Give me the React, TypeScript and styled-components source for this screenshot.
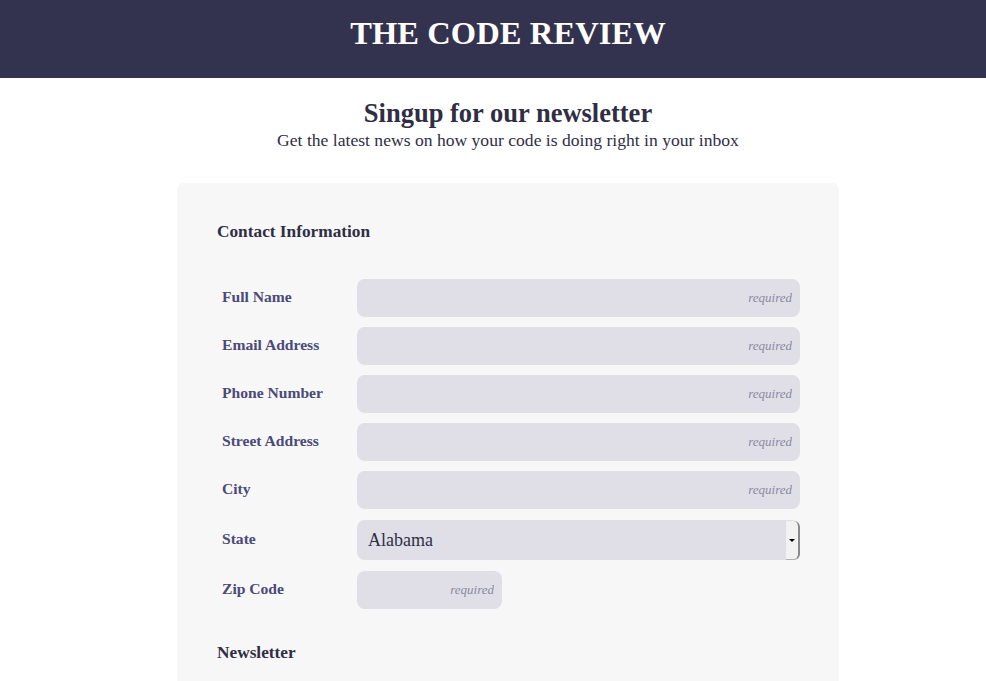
import React from "react";
import styled, { createGlobalStyle } from "styled-components";

const Global = createGlobalStyle`
  html, body { margin: 0; padding: 0; background: #ffffff; }
  body { font-family: "Liberation Serif", "Times New Roman", serif; color: #2f2e45; }
  * { box-sizing: border-box; }
`;

const Header = styled.header`
  height: 78px;
  background: #34334f;
  display: flex;
  align-items: center;
  justify-content: center;
  padding-left: 30px;
`;

const Brand = styled.h1`
  margin: 0 0 12px 0;
  color: #ffffff;
  font-size: 32.5px;
  font-weight: 700;
  letter-spacing: 0.1px;
`;

const Main = styled.main`
  padding-left: 30px;
`;

const Intro = styled.section`
  display: flex;
  flex-direction: column;
  align-items: center;
  padding-top: 19px;
`;

const Title = styled.h2`
  margin: 0;
  font-size: 26.5px;
  line-height: 32px;
  font-weight: 700;
  color: #2f2e45;
`;

const Sub = styled.p`
  margin: 0;
  font-size: 17.6px;
  line-height: 22px;
  color: #2f2e45;
`;

const Card = styled.form`
  margin: 32px auto 0;
  width: 662px;
  background: #f7f7f7;
  border-radius: 7px;
  padding: 38px 39px 40px 40px;
`;

const Section = styled.h3`
  margin: 0 0 36px 0;
  font-size: 17.3px;
  line-height: 22px;
  font-weight: 700;
  color: #2f2e45;
`;

const Rows = styled.div`
  display: flex;
  flex-direction: column;
  gap: 10px;
  margin-bottom: 33px;
`;

const Row = styled.label`
  display: flex;
  align-items: center;
`;

const Label = styled.span`
  width: 140px;
  padding-left: 5px;
  font-size: 15.6px;
  font-weight: 700;
  color: #4b4a78;
  margin-top: -2px;
`;

const Input = styled.input<{ $w?: number }>`
  width: ${(p) => (p.$w ? `${p.$w}px` : "443px")};
  height: 38px;
  border: none;
  outline: none;
  border-radius: 8px;
  background: #e0dfe8;
  padding: 0 8px;
  text-align: right;
  font-family: "Liberation Serif", "Times New Roman", serif;
  font-size: 13px;
  &::placeholder {
    font-style: italic;
    color: #8b8aa0;
  }
`;

const SelectWrap = styled.div`
  position: relative;
  width: 443px;
  height: 40px;
  margin: 1px 0;
`;

const Select = styled.select`
  appearance: none;
  -webkit-appearance: none;
  width: 100%;
  height: 100%;
  border: none;
  outline: none;
  border-radius: 8px;
  background: #e0dfe8;
  padding: 0 11px;
  font-family: "Liberation Serif", "Times New Roman", serif;
  font-size: 18px;
  color: #2f2e45;
`;

const Arrow = styled.span`
  position: absolute;
  right: 0;
  top: 1px;
  bottom: 0;
  width: 14px;
  background: #f2f2f2;
  border-right: 2px solid #8a8a8a;
  border-bottom: 1px solid #b0b0b0;
  border-radius: 0 6px 6px 0;
  display: flex;
  align-items: center;
  justify-content: center;
  pointer-events: none;
  &::after {
    content: "";
    border-left: 3px solid transparent;
    border-right: 3px solid transparent;
    border-top: 3px solid #000;
  }
`;

const fields = ["Full Name", "Email Address", "Phone Number", "Street Address", "City"];

export default function App() {
  return (
    <>
      <Global />
      <Header>
        <Brand>THE CODE REVIEW</Brand>
      </Header>
      <Main>
        <Intro>
          <Title>Singup for our newsletter</Title>
          <Sub>Get the latest news on how your code is doing right in your inbox</Sub>
        </Intro>
        <Card onSubmit={(e) => e.preventDefault()}>
          <Section>Contact Information</Section>
          <Rows>
            {fields.map((f) => (
              <Row key={f}>
                <Label>{f}</Label>
                <Input placeholder="required" />
              </Row>
            ))}
            <Row>
              <Label>State</Label>
              <SelectWrap>
                <Select defaultValue="Alabama">
                  <option>Alabama</option>
                  <option>Alaska</option>
                  <option>Arizona</option>
                </Select>
                <Arrow />
              </SelectWrap>
            </Row>
            <Row>
              <Label>Zip Code</Label>
              <Input placeholder="required" $w={145} />
            </Row>
          </Rows>
          <Section>Newsletter</Section>
        </Card>
      </Main>
    </>
  );
}
